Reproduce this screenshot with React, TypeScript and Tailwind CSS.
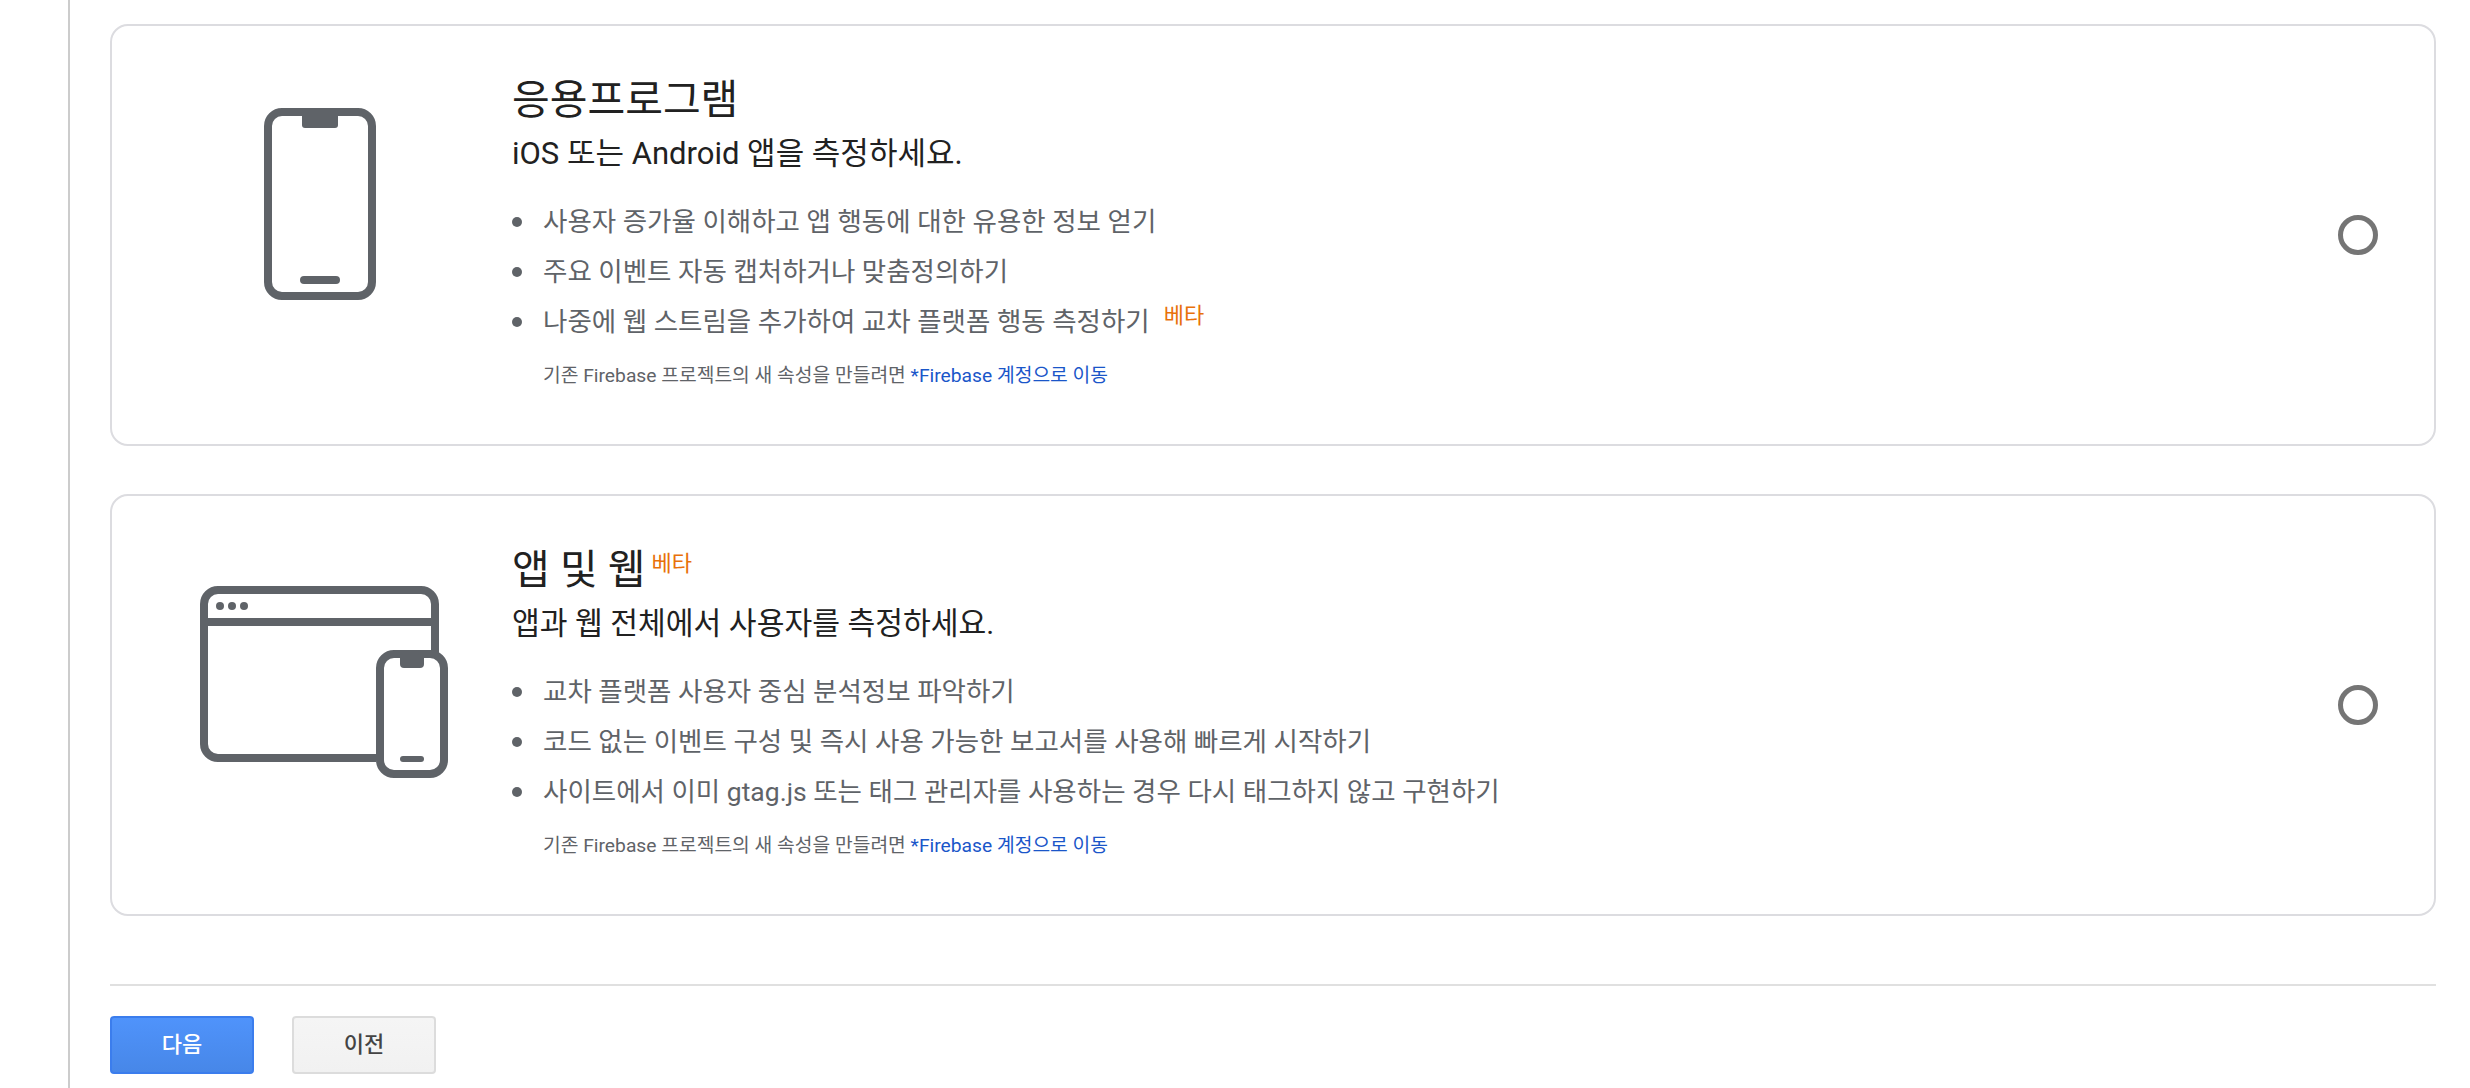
const font = { fontFamily: 'Roboto, "Noto Sans CJK KR", sans-serif' };

function PhoneIcon() {
  return (
    <svg width="112" height="192" viewBox="0 0 112 192" fill="none">
      <rect x="4" y="4" width="104" height="184" rx="14" stroke="#5f6368" strokeWidth="8" />
      <path d="M38 6h36v11a3 3 0 0 1-3 3H41a3 3 0 0 1-3-3z" fill="#5f6368" />
      <rect x="36" y="168" width="40" height="8" rx="4" fill="#5f6368" />
    </svg>
  );
}

function AppWebIcon() {
  return (
    <svg width="248" height="192" viewBox="0 0 248 192" fill="none">
      <path d="M176 172H18a14 14 0 0 1-14-14V18A14 14 0 0 1 18 4h203a14 14 0 0 1 14 14v50" stroke="#5f6368" strokeWidth="8" />
      <path d="M4 36h231" stroke="#5f6368" strokeWidth="8" />
      <circle cx="20" cy="20" r="4" fill="#5f6368" />
      <circle cx="32" cy="20" r="4" fill="#5f6368" />
      <circle cx="44" cy="20" r="4" fill="#5f6368" />
      <rect x="180" y="68" width="64" height="120" rx="14" fill="#fff" stroke="#5f6368" strokeWidth="8" />
      <path d="M200 68h24v10a4 4 0 0 1-4 4h-16a4 4 0 0 1-4-4z" fill="#5f6368" />
      <rect x="200" y="170" width="24" height="6" rx="3" fill="#5f6368" />
    </svg>
  );
}

function Card({ icon, iconBox, title, badge, sub, subClass, items, beta }: { icon: React.ReactNode; iconBox: string; title: string; badge?: boolean; sub: string; subClass: string; items: string[]; beta?: boolean }) {
  return (
    <div className="flex h-[422px] items-center rounded-[18px] border-2 border-[#dcdce0]">
      <div className={iconBox}>{icon}</div>
      <div className="flex h-full flex-1 flex-col pt-[46px]">
        <div className="flex h-[56px] items-center text-[41px] leading-[56px] text-[#212121]">
          {title}
          {badge && <span className="mb-[12px] ml-[6px] text-[22px] leading-[28px] text-[#e8710a]">베타</span>}
        </div>
        <div className={subClass}>{sub}</div>
        <ul className="mt-[23px] flex flex-col">
          {items.map((t, i) => (
            <li key={t} className="flex h-[50px] items-center text-[26.5px] text-[#5f6368]">
              <span className="mr-[21px] h-[10px] w-[10px] rounded-full bg-[#5f6368]" />
              {t}
              {beta && i === 2 && <span className="mb-[12px] ml-[14px] text-[22px] leading-[28px] text-[#e8710a]">베타</span>}
            </li>
          ))}
        </ul>
        <div className="mt-[15px] pl-[31px] text-[19.25px] leading-[28px] text-[#5f6368]">
          기존 Firebase 프로젝트의 새 속성을 만들려면 <span className="text-[#1a56c9]">*Firebase 계정으로 이동</span>
        </div>
      </div>
      <div className="mr-[56px] h-[40px] w-[40px] shrink-0 rounded-full border-[5px] border-[#757575]" />
    </div>
  );
}

export default function App() {
  return (
    <div className="flex h-[1088px] overflow-hidden bg-white" style={font}>
      <div className="ml-[68px] w-[2px] shrink-0 bg-[#cccccc]" />
      <div className="ml-[40px] flex w-[2326px] shrink-0 flex-col pt-[24px]">
        <Card
          icon={<PhoneIcon />}
          iconBox="flex h-full w-[400px] shrink-0 items-center justify-center pb-[62px] pl-[16px]"
          title="응용프로그램"
          sub="iOS 또는 Android 앱을 측정하세요."
          subClass="mt-[6px] text-[31px] leading-[40px] text-[#212121]"
          beta
          items={[
            "사용자 증가율 이해하고 앱 행동에 대한 유용한 정보 얻기",
            "주요 이벤트 자동 캡처하거나 맞춤정의하기",
            "나중에 웹 스트림을 추가하여 교차 플랫폼 행동 측정하기",
          ]}
        />
        <div className="mt-[48px]">
          <Card
            icon={<AppWebIcon />}
            iconBox="flex h-full w-[400px] shrink-0 items-center justify-center pb-[46px] pl-[24px]"
            title="앱 및 웹"
            badge
            sub="앱과 웹 전체에서 사용자를 측정하세요."
            subClass="mt-[6px] text-[30.2px] leading-[40px] text-[#212121]"
            items={[
              "교차 플랫폼 사용자 중심 분석정보 파악하기",
              "코드 없는 이벤트 구성 및 즉시 사용 가능한 보고서를 사용해 빠르게 시작하기",
              "사이트에서 이미 gtag.js 또는 태그 관리자를 사용하는 경우 다시 태그하지 않고 구현하기",
            ]}
          />
        </div>
        <div className="mt-[68px] h-[2px] bg-[#e0e0e0]" />
        <div className="mt-[30px] flex gap-[38px]">
          <button className="h-[58px] w-[144px] rounded-[4px] border-2 border-[#3b7ded] bg-gradient-to-b from-[#4f93fb] to-[#4787e8] pb-[2px] text-[22px] font-medium text-white">다음</button>
          <button className="h-[58px] w-[144px] rounded-[4px] border-2 border-[#dcdcdc] bg-gradient-to-b from-[#f5f5f5] to-[#f1f1f1] pb-[2px] text-[22px] font-medium text-[#444444]">이전</button>
        </div>
      </div>
    </div>
  );
}
